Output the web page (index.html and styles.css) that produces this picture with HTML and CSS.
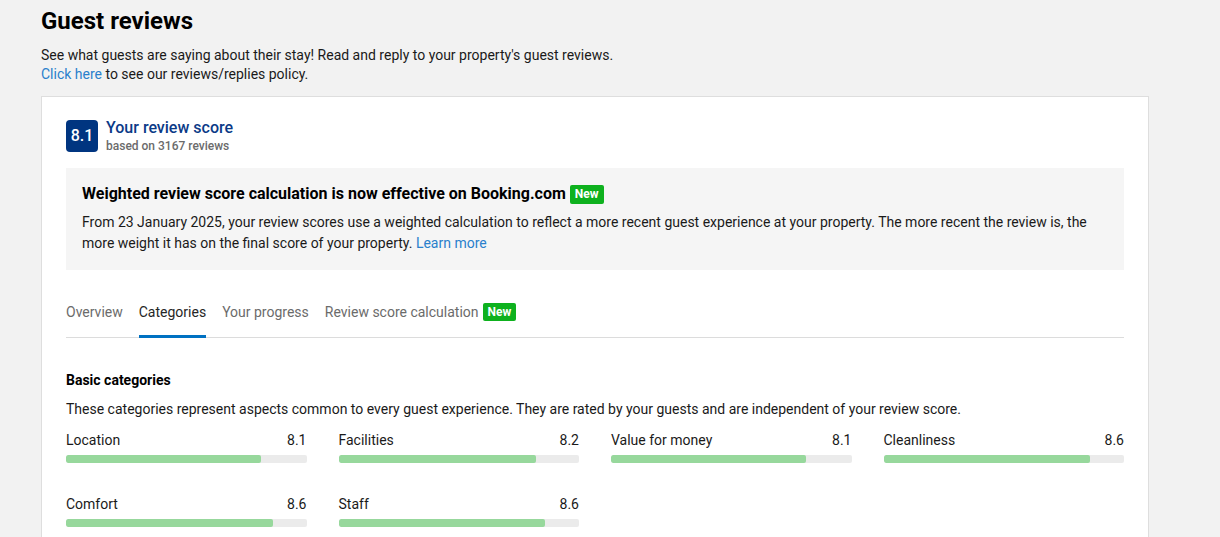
FILE: index.html
```html
<!DOCTYPE html>
<html lang="en">
<head>
<meta charset="utf-8">
<title>Guest reviews</title>
<link rel="stylesheet" href="styles.css">
</head>
<body>
<div class="page">
  <h1 class="page-title">Guest reviews</h1>
  <p class="intro">See what guests are saying about their stay! Read and reply to your property's guest reviews.<br><a href="#" class="link">Click here</a> to see our reviews/replies policy.</p>

  <div class="card">
    <div class="score-head">
      <div class="score-badge">8.1</div>
      <div class="score-text">
        <div class="score-title">Your review score</div>
        <div class="score-sub">based on 3167 reviews</div>
      </div>
    </div>

    <div class="notice">
      <div class="notice-title">Weighted review score calculation is now effective on Booking.com <span class="tag-new">New</span></div>
      <p class="notice-body">From 23 January 2025, your review scores use a weighted calculation to reflect a more recent guest experience at your property. The more recent the review is, the more weight it has on the final score of your property. <a href="#" class="link">Learn more</a></p>
    </div>

    <div class="tabs">
      <div class="tab">Overview</div>
      <div class="tab tab-active">Categories</div>
      <div class="tab">Your progress</div>
      <div class="tab">Review score calculation <span class="tag-new">New</span></div>
    </div>

    <h2 class="section-title">Basic categories</h2>
    <p class="section-desc">These categories represent aspects common to every guest experience. They are rated by your guests and are independent of your review score.</p>

    <div class="cat-grid">
      <div class="cat">
        <div class="cat-row"><span>Location</span><span>8.1</span></div>
        <div class="bar"><div class="bar-fill" style="width:81%"></div></div>
      </div>
      <div class="cat">
        <div class="cat-row"><span>Facilities</span><span>8.2</span></div>
        <div class="bar"><div class="bar-fill" style="width:82%"></div></div>
      </div>
      <div class="cat">
        <div class="cat-row"><span>Value for money</span><span>8.1</span></div>
        <div class="bar"><div class="bar-fill" style="width:81%"></div></div>
      </div>
      <div class="cat">
        <div class="cat-row"><span>Cleanliness</span><span>8.6</span></div>
        <div class="bar"><div class="bar-fill" style="width:86%"></div></div>
      </div>
      <div class="cat">
        <div class="cat-row"><span>Comfort</span><span>8.6</span></div>
        <div class="bar"><div class="bar-fill" style="width:86%"></div></div>
      </div>
      <div class="cat">
        <div class="cat-row"><span>Staff</span><span>8.6</span></div>
        <div class="bar"><div class="bar-fill" style="width:86%"></div></div>
      </div>
    </div>
  </div>
</div>
</body>
</html>
```

FILE: styles.css
```css
* { box-sizing: border-box; }
html, body { margin: 0; padding: 0; }
body {
  background: #f2f2f2;
  font-family: Roboto, "Liberation Sans", Arial, sans-serif;
  color: #1a1a1a;
  font-size: 14px;
  line-height: 20px;
}
.page {
  padding: 4px 0 40px 41px;
}
.page-title {
  margin: 0;
  font-size: 24px;
  line-height: 34px;
  font-weight: 700;
  color: #000;
}
.intro {
  margin: 8px 0 0;
  line-height: 19px;
  color: #1a1a1a;
}
.link {
  color: #2a80cc;
  text-decoration: none;
}
.card {
  width: 1108px;
  margin-top: 12px;
  background: #fff;
  border: 1px solid #dedede;
  padding: 22px 24px 60px;
}
.score-head {
  display: flex;
  align-items: flex-start;
  gap: 8px;
}
.score-badge {
  width: 32px;
  height: 32px;
  margin-top: 1px;
  background: #003580;
  color: #fff;
  border-radius: 4px;
  display: flex;
  align-items: center;
  justify-content: center;
  font-size: 16px;
  font-weight: 500;
}
.score-title {
  color: #0b3a87;
  font-size: 16px;
  line-height: 18px;
  font-weight: 500;
}
.score-sub {
  color: #6b6b6b;
  font-size: 12px;
  line-height: 16px;
  font-weight: 500;
  margin-top: 1px;
}
.notice {
  margin-top: 14px;
  background: #f5f5f5;
  padding: 16px;
}
.notice-title {
  font-size: 16px;
  line-height: 20px;
  font-weight: 700;
  color: #000;
  display: flex;
  align-items: center;
  gap: 4px;
}
.tag-new {
  display: inline-block;
  background: #0eb11e;
  color: #fff;
  font-size: 12px;
  font-weight: 700;
  line-height: 19px;
  padding: 0 5px;
  border-radius: 2px;
}
.notice-body {
  margin: 8px 0 0;
  line-height: 21px;
  color: #1a1a1a;
}
.tabs {
  display: flex;
  gap: 16px;
  margin-top: 24px;
  border-bottom: 1px solid #dcdcdc;
}
.tab {
  padding: 8px 0 13px;
  line-height: 20px;
  color: #6b6b6b;
  border-bottom: 3px solid transparent;
  margin-bottom: -1px;
  display: flex;
  align-items: center;
  gap: 4px;
}
.tab .tag-new { line-height: 18px; }
.tab-active {
  color: #262626;
  border-bottom-color: #0071c2;
}
.section-title {
  margin: 32px 0 0;
  font-size: 14px;
  line-height: 20px;
  font-weight: 700;
  color: #000;
}
.section-desc {
  margin: 9px 0 0;
  color: #1a1a1a;
}
.cat-grid {
  margin-top: 11px;
  display: grid;
  grid-template-columns: repeat(4, 1fr);
  column-gap: 32px;
  row-gap: 31px;
}
.cat-row {
  display: flex;
  justify-content: space-between;
  line-height: 20px;
  color: #1a1a1a;
}
.bar {
  margin-top: 5px;
  height: 8px;
  background: #ebebeb;
  border-radius: 2px;
  overflow: hidden;
}
.bar-fill {
  height: 100%;
  background: #97d89c;
  border-radius: 2px;
}
```
